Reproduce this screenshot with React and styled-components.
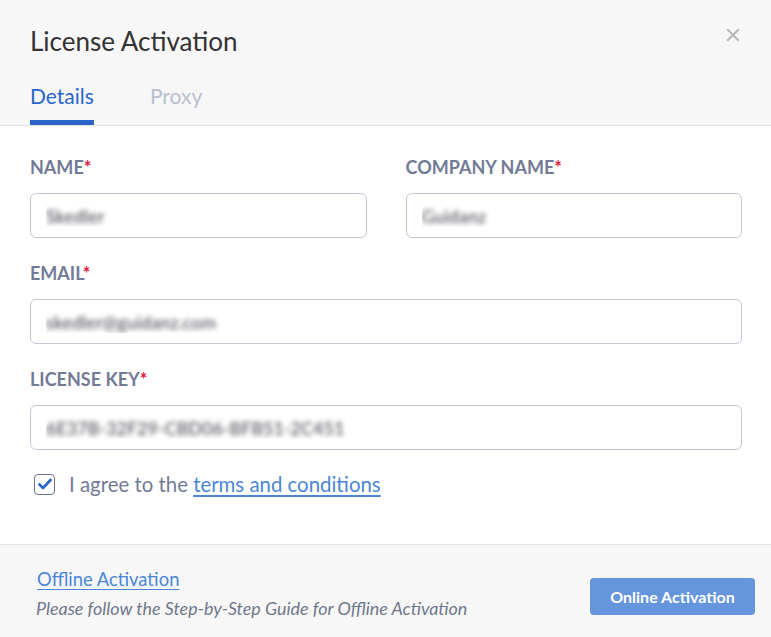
import React from 'react';
import styled, { createGlobalStyle } from 'styled-components';

const GlobalStyle = createGlobalStyle`
    html, body {
        margin: 0;
        padding: 0;
        background: #ffffff;
    }
    body {
        font-family: Lato, "Open Sans", sans-serif;
        -webkit-font-smoothing: antialiased;
    }
    * {
        box-sizing: border-box;
    }
`

function Field({ label, value, wide }) {
    return (
        <FieldBox wide={wide}>
            <Label>
                {label}<Star>*</Star>
            </Label>
            <Input readOnly value={value} />
        </FieldBox>
    );
}

function App() {
    return (
        <>
            <GlobalStyle />
            <Modal>
                <Header>
                    <TitleRow>
                        <Title>License Activation</Title>
                        <Close aria-label="close">
                            <svg width="14" height="14" viewBox="0 0 14 14">
                                <path d="M2 2 L12 12 M12 2 L2 12" stroke="#b9b9b9" strokeWidth="2.2" strokeLinecap="square" />
                            </svg>
                        </Close>
                    </TitleRow>
                    <Tabs>
                        <Tab active>Details</Tab>
                        <Tab>Proxy</Tab>
                    </Tabs>
                </Header>

                <Body>
                    <Grid>
                        <Field label="NAME" value="Skedler" />
                        <Field label="COMPANY NAME" value="Guidanz" />
                        <Field label="EMAIL" value="skedler@guidanz.com" wide />
                        <Field label="LICENSE KEY" value="6E37B-32F29-CBD06-BFB51-2C451" wide />
                    </Grid>
                    <Agree>
                        <Check>
                            <svg width="14" height="12" viewBox="0 0 14 12">
                                <path d="M1.5 6.5 L5 10 L12.5 2" fill="none" stroke="#2a64c9" strokeWidth="2.6" strokeLinecap="round" strokeLinejoin="round" />
                            </svg>
                        </Check>
                        <AgreeText>
                            I agree to the <TextLink href="#">terms and conditions</TextLink>
                        </AgreeText>
                    </Agree>
                </Body>

                <Footer>
                    <Offline>
                        <OfflineLink href="#">Offline Activation</OfflineLink>
                        <Hint>Please follow the Step-by-Step Guide for Offline Activation</Hint>
                    </Offline>
                    <Button>Online Activation</Button>
                </Footer>
            </Modal>
        </>
    );
}

export default App;

const Modal = styled.div`
    width: 771px;
    height: 637px;
    display: flex;
    flex-direction: column;
    background: #ffffff;
`

const Header = styled.div`
    background: #f7f7f7;
    padding: 26px 29px 0 30px;
    border-bottom: 1px solid #e2e2e2;
`

const TitleRow = styled.div`
    display: flex;
    justify-content: space-between;
    align-items: flex-start;
`

const Title = styled.h1`
    margin: 0;
    font-size: 26px;
    line-height: 30px;
    font-weight: 400;
    color: #333333;
`

const Close = styled.button`
    border: 0;
    background: none;
    padding: 0;
    margin: 2px 2px 0 0;
    cursor: pointer;
    line-height: 0;
`

const Tabs = styled.div`
    display: flex;
    gap: 56px;
    margin-top: 28px;
`

const Tab = styled.div`
    font-size: 21px;
    line-height: 24px;
    padding-bottom: 12px;
    color: ${p => p.active ? '#2a64c9' : '#b8bfce'};
    border-bottom: 5px solid ${p => p.active ? '#2a64c9' : 'transparent'};
    cursor: pointer;
`

const Body = styled.div`
    flex: 1;
    padding: 30px 29px 0 30px;
`

const Grid = styled.div`
    display: grid;
    grid-template-columns: 1fr 1fr;
    column-gap: 39px;
    row-gap: 24px;
`

const FieldBox = styled.div`
    grid-column: ${p => p.wide ? '1 / -1' : 'auto'};
    display: flex;
    flex-direction: column;
    gap: 15px;
`

const Label = styled.label`
    font-size: 18px;
    line-height: 22px;
    font-weight: 700;
    color: #737a96;
`

const Star = styled.span`
    color: #e5163f;
`

const Input = styled.input`
    height: 45px;
    width: 100%;
    border: 1px solid #c4c7d3;
    border-radius: 6px;
    background: #ffffff;
    padding: 0 15px;
    font-family: Lato, sans-serif;
    font-size: 18px;
    color: transparent;
    text-shadow: 0 0 5px rgba(50, 50, 60, 0.9);
    outline: none;
`

const Agree = styled.div`
    display: flex;
    align-items: center;
    gap: 14px;
    margin: 22px 0 0 4px;
`

const Check = styled.span`
    width: 21px;
    height: 21px;
    border: 1.5px solid #6b7390;
    border-radius: 4px;
    display: flex;
    align-items: center;
    justify-content: center;
`

const AgreeText = styled.span`
    font-size: 20.4px;
    line-height: 24px;
    color: #737a96;
`

const TextLink = styled.a`
    color: #4a86d8;
    text-decoration: underline;
    text-underline-offset: 3px;
`

const Footer = styled.div`
    height: 93px;
    background: #f7f7f7;
    border-top: 1px solid #e2e2e2;
    display: flex;
    align-items: center;
    justify-content: space-between;
    padding: 0 16px 0 37px;
`

const Offline = styled.div`
    display: flex;
    flex-direction: column;
    gap: 7px;
    margin-top: 4px;
`

const OfflineLink = styled.a`
    font-size: 18.4px;
    line-height: 22px;
    color: #4a86d8;
    text-decoration: underline;
    text-underline-offset: 3px;
`

const Hint = styled.span`
    font-size: 17.9px;
    line-height: 22px;
    font-style: italic;
    color: #70778b;
    margin-left: -1px;
`

const Button = styled.button`
    width: 165px;
    height: 37px;
    border: 0;
    border-radius: 4px;
    background: #6495dd;
    color: #ffffff;
    font-family: Lato, sans-serif;
    font-size: 16px;
    font-weight: 700;
    cursor: pointer;
    margin-top: 10px;
`
